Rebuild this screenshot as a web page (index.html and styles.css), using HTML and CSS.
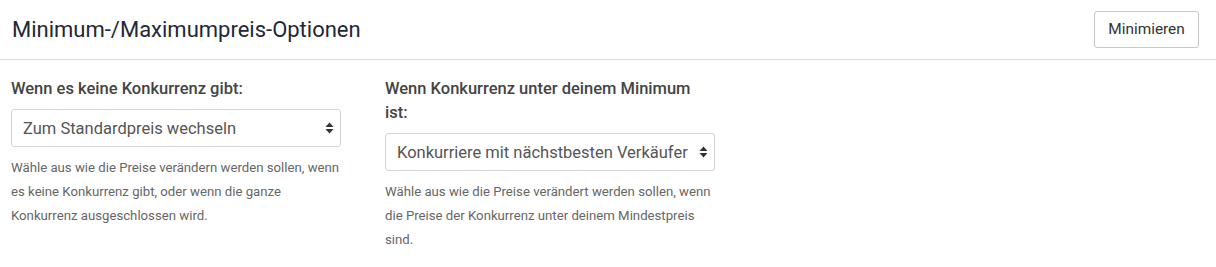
FILE: index.html
```html
<!DOCTYPE html>
<html lang="de">
<head>
    <meta charset="UTF-8">
    <meta name="viewport" content="width=device-width, initial-scale=1.0">
    <title>Minimum-/Maximumpreis-Optionen</title>
    <link rel="stylesheet" href="styles.css">
</head>
<body>
    <div class="panel">
        <header class="panel-header">
            <h2>Minimum-/Maximumpreis-Optionen</h2>
            <button class="minimize-btn">Minimieren</button>
        </header>

        <div class="panel-body">
            <div class="field">
                <label for="no-competition">Wenn es keine Konkurrenz gibt:</label>
                <div class="select-wrap">
                    <select id="no-competition">
                        <option>Zum Standardpreis wechseln</option>
                        <option>Zum Maximalpreis wechseln</option>
                        <option>Preis beibehalten</option>
                    </select>
                    <svg class="select-arrow" width="9" height="12" viewBox="0 0 9 12">
                        <path d="M4.5 0.5 L8.5 5 L0.5 5 Z" fill="#333"/>
                        <path d="M0.5 7 L8.5 7 L4.5 11.5 Z" fill="#333"/>
                    </svg>
                </div>
                <p class="help">Wähle aus wie die Preise verändern werden sollen, wenn es keine Konkurrenz gibt, oder wenn die ganze Konkurrenz ausgeschlossen wird.</p>
            </div>

            <div class="field">
                <label for="below-minimum">Wenn Konkurrenz unter deinem Minimum ist:</label>
                <div class="select-wrap">
                    <select id="below-minimum">
                        <option>Konkurriere mit nächstbesten Verkäufer</option>
                        <option>Zum Mindestpreis wechseln</option>
                        <option>Preis beibehalten</option>
                    </select>
                    <svg class="select-arrow" width="9" height="12" viewBox="0 0 9 12">
                        <path d="M4.5 0.5 L8.5 5 L0.5 5 Z" fill="#333"/>
                        <path d="M0.5 7 L8.5 7 L4.5 11.5 Z" fill="#333"/>
                    </svg>
                </div>
                <p class="help">Wähle aus wie die Preise verändert werden sollen, wenn die Preise der Konkurrenz unter deinem Mindestpreis sind.</p>
            </div>
        </div>
    </div>
</body>
</html>
```

FILE: styles.css
```css
* {
    box-sizing: border-box;
    margin: 0;
    padding: 0;
}

body {
    font-family: Roboto, "Liberation Sans", Arial, sans-serif;
    background: #fff;
    color: #333;
}

.panel-header {
    display: flex;
    justify-content: space-between;
    align-items: center;
    height: 60px;
    padding: 0 17px 1px 12px;
    border-bottom: 1px solid #dcdcdc;
}

.panel-header h2 {
    font-size: 22px;
    font-weight: 400;
    color: #1f2836;
}

.minimize-btn {
    width: 105px;
    height: 37px;
    background: #fff;
    border: 1px solid #c8c8c8;
    border-radius: 3px;
    font-family: inherit;
    font-size: 15.4px;
    color: #333;
    cursor: pointer;
}

.panel-body {
    display: grid;
    grid-template-columns: 330px 330px;
    column-gap: 44px;
    padding: 17px 11px 0;
}

.field label {
    display: block;
    font-size: 16.5px;
    font-weight: 500;
    line-height: 24px;
    color: #444;
    margin-bottom: 8px;
}

.select-wrap {
    position: relative;
}

.select-wrap select {
    width: 100%;
    height: 38px;
    padding: 0 18px 0 11px;
    border: 1px solid #d4d4d4;
    border-radius: 3px;
    background: #fff;
    font-family: inherit;
    font-size: 16.5px;
    color: #555;
    appearance: none;
    -webkit-appearance: none;
}

.select-arrow {
    position: absolute;
    right: 7px;
    top: 13px;
    pointer-events: none;
}

.help {
    margin-top: 9px;
    font-size: 13.2px;
    line-height: 24px;
    color: #666;
}
```
